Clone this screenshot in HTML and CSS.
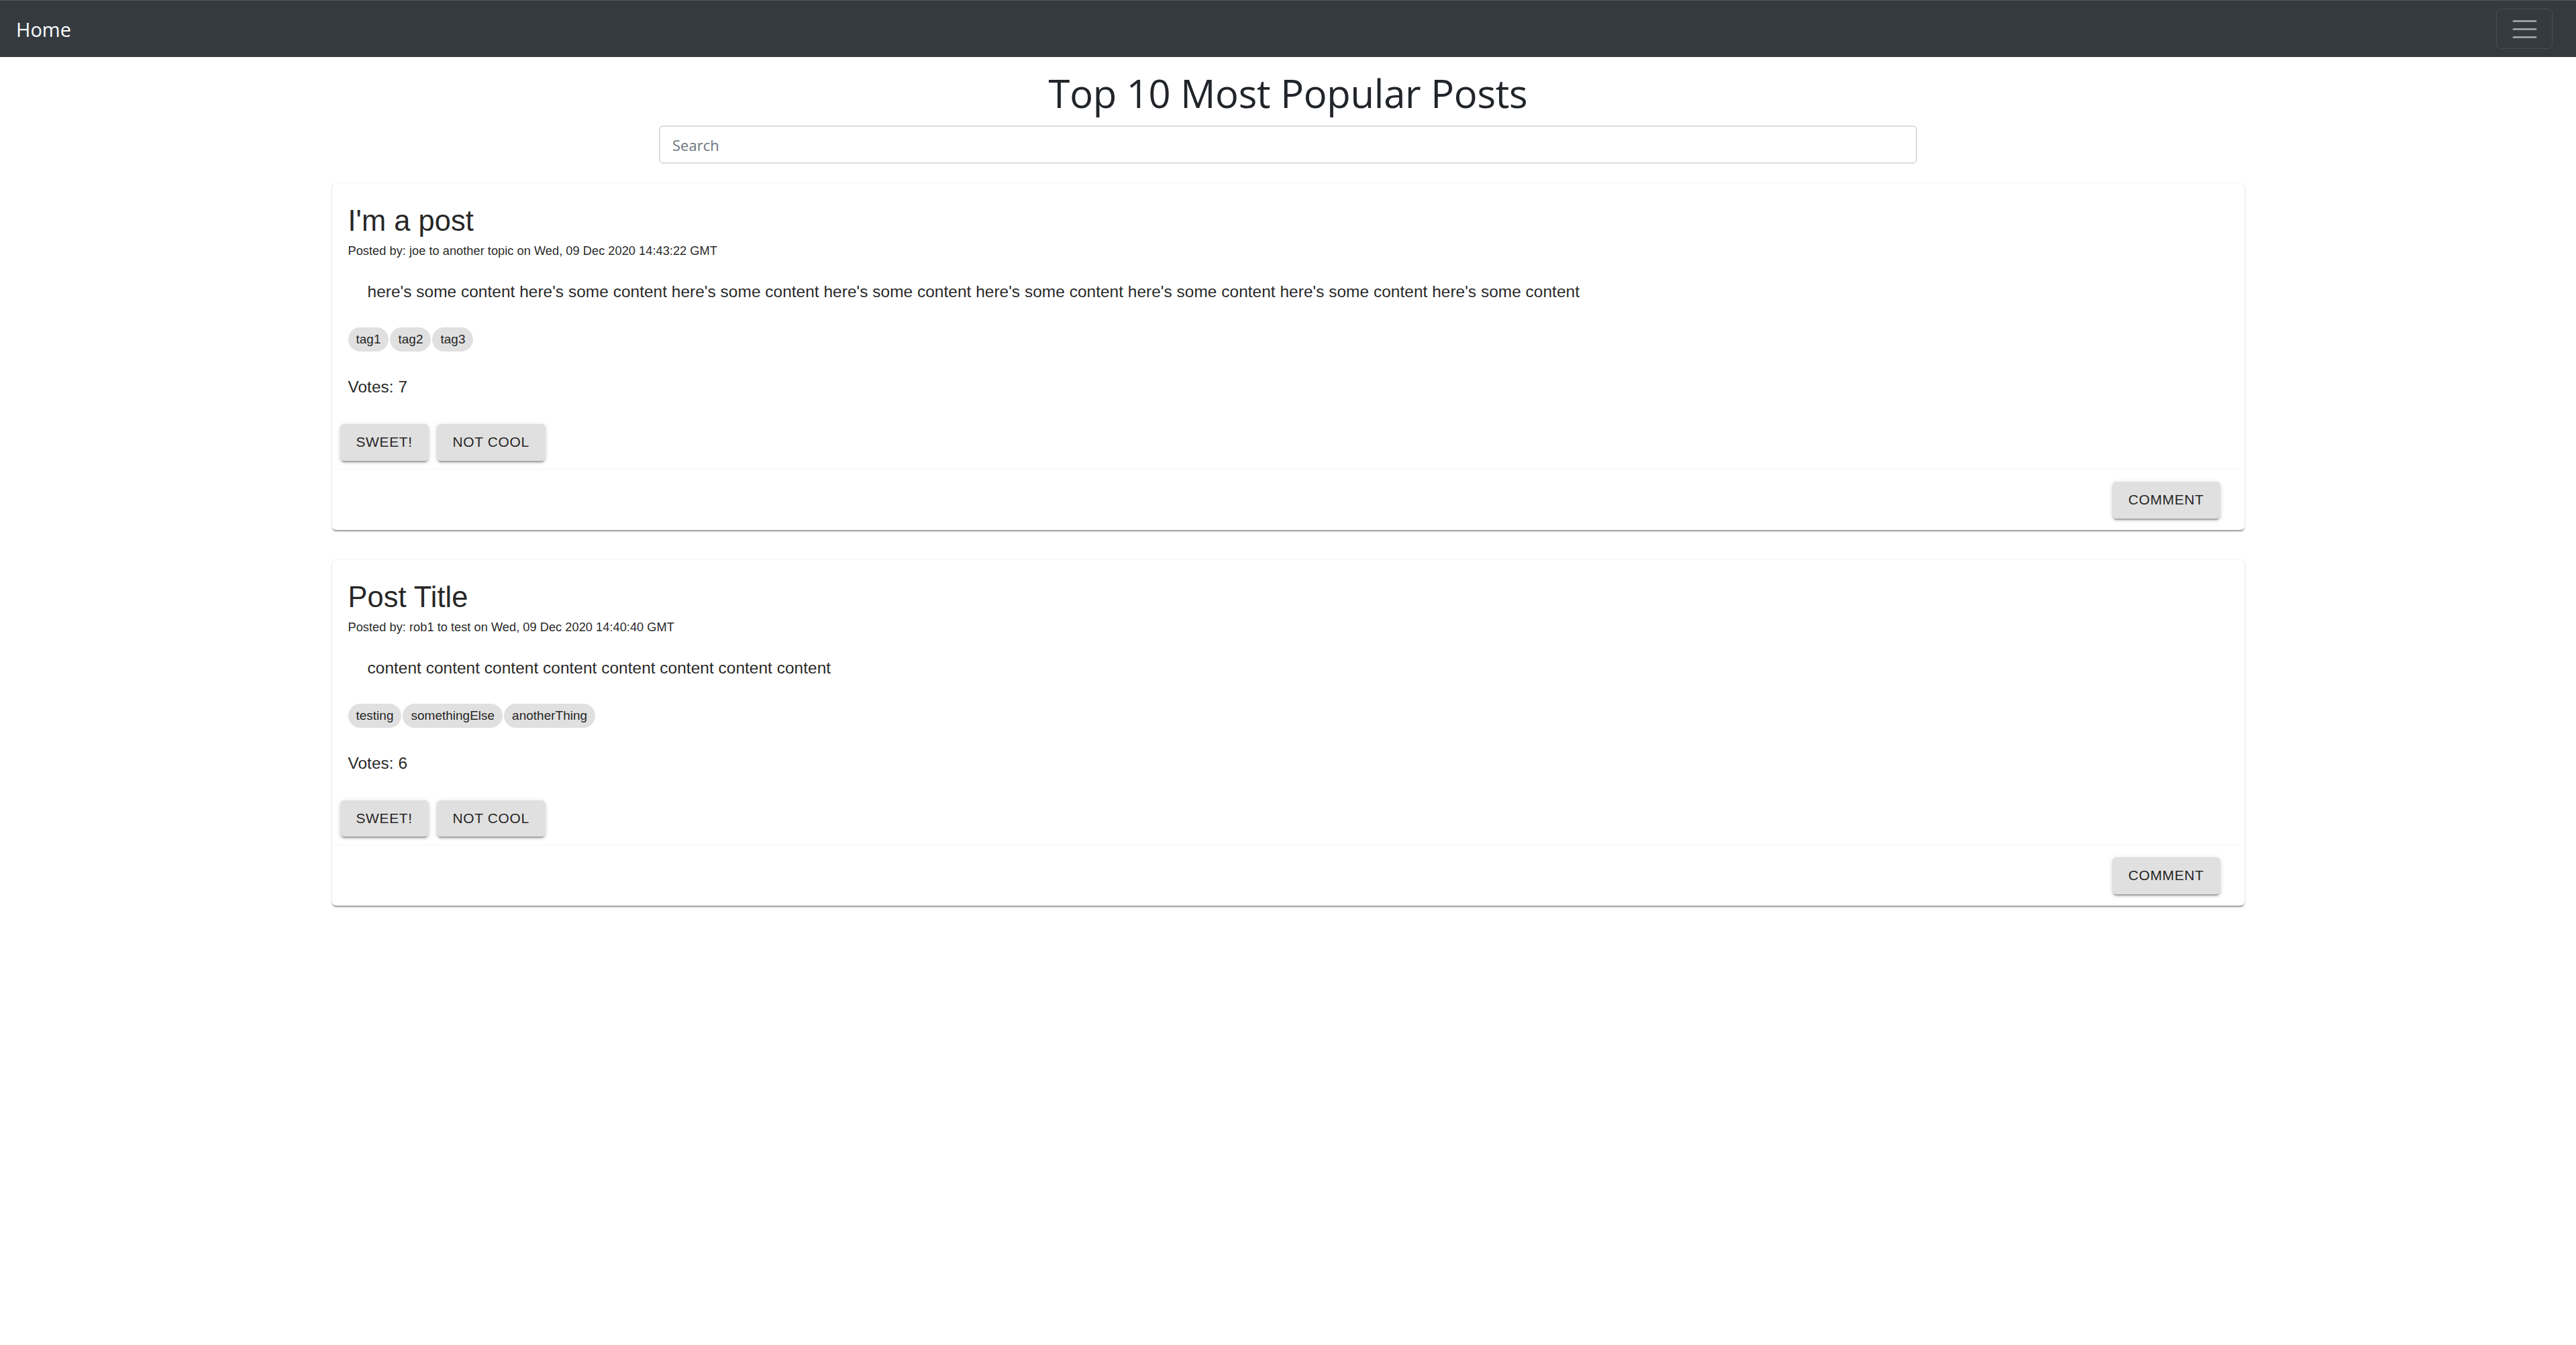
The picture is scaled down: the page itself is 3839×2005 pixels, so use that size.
FILE: index.html
```html
<!DOCTYPE html>
<html lang="en">
<head>
<meta charset="utf-8">
<title>Top 10 Most Popular Posts</title>
<link rel="stylesheet" href="styles.css">
</head>
<body>
<nav class="navbar">
  <a class="brand" href="#">Home</a>
  <button class="toggler" type="button" aria-label="Toggle navigation">
    <svg class="toggler-icon" viewBox="0 0 30 30" width="45" height="45">
      <path d="M4 7h22M4 15h22M4 23h22" stroke="rgba(255,255,255,0.5)" stroke-width="2" stroke-linecap="round" stroke-miterlimit="10" fill="none"/>
    </svg>
  </button>
</nav>
<main class="page">
  <h1 class="page-title">Top 10 Most Popular Posts</h1>
  <input class="search" type="text" placeholder="Search">
  <div class="posts">
    <article class="card">
      <div class="card-content">
        <h2 class="post-title">I'm a post</h2>
        <p class="post-meta">Posted by: joe to another topic on Wed, 09 Dec 2020 14:43:22 GMT</p>
        <p class="post-body">here's some content here's some content here's some content here's some content here's some content here's some content here's some content here's some content</p>
        <div class="tags"><span class="tag">tag1</span><span class="tag">tag2</span><span class="tag">tag3</span></div>
        <p class="votes">Votes: 7</p>
      </div>
      <div class="card-actions">
        <button class="btn" type="button">Sweet!</button>
        <button class="btn" type="button">Not Cool</button>
      </div>
      <div class="card-footer">
        <button class="btn" type="button">Comment</button>
      </div>
    </article>
    <article class="card">
      <div class="card-content">
        <h2 class="post-title">Post Title</h2>
        <p class="post-meta">Posted by: rob1 to test on Wed, 09 Dec 2020 14:40:40 GMT</p>
        <p class="post-body">content content content content content content content content</p>
        <div class="tags"><span class="tag">testing</span><span class="tag">somethingElse</span><span class="tag">anotherThing</span></div>
        <p class="votes">Votes: 6</p>
      </div>
      <div class="card-actions">
        <button class="btn" type="button">Sweet!</button>
        <button class="btn" type="button">Not Cool</button>
      </div>
      <div class="card-footer">
        <button class="btn" type="button">Comment</button>
      </div>
    </article>
  </div>
</main>
</body>
</html>
```

FILE: styles.css
```css
* {
  box-sizing: border-box;
}

html, body {
  margin: 0;
  padding: 0;
  background: #ffffff;
}

body {
  font-family: "Open Sans", "Noto Sans", sans-serif;
  color: #212529;
}

.navbar {
  display: flex;
  align-items: center;
  justify-content: space-between;
  height: 85px;
  padding: 12px 35px 12px 24px;
  background: #343a40;
  border-top: 1px solid #55595e;
}

.brand {
  font-family: "Open Sans", "Noto Sans", sans-serif;
  font-size: 29px;
  line-height: 45px;
  color: #ffffff;
  text-decoration: none;
  padding: 7px 0;
}

.toggler {
  display: flex;
  align-items: center;
  justify-content: center;
  width: 84px;
  height: 60px;
  padding: 6px 18px;
  background: transparent;
  border: 1.5px solid rgba(255, 255, 255, 0.1);
  border-radius: 7px;
}

.toggler-icon {
  display: block;
  width: 45px;
  height: 45px;
}

.page {
  display: flex;
  flex-direction: column;
  align-items: center;
}

.page-title {
  margin: 18px 0 12px;
  font-family: "Open Sans", "Noto Sans", sans-serif;
  font-weight: 500;
  font-size: 58px;
  line-height: 72px;
  letter-spacing: -0.3px;
  color: #212529;
}

.search {
  display: block;
  width: 1875px;
  height: 57px;
  padding: 9px 18px;
  font-family: "Open Sans", "Noto Sans", sans-serif;
  font-size: 22px;
  color: #495057;
  background: #ffffff;
  border: 2px solid #dadde0;
  border-radius: 6px;
  outline: none;
}

.search::placeholder {
  color: #6c757d;
}

.posts {
  display: flex;
  flex-direction: column;
  gap: 45px;
  width: 2850px;
  margin-top: 30px;
  padding-bottom: 40px;
}

.card {
  font-family: "Liberation Sans", Arial, Helvetica, sans-serif;
  color: rgba(0, 0, 0, 0.87);
  background: #ffffff;
  border-radius: 6px;
  box-shadow: 0 3px 1.5px -1.5px rgba(0, 0, 0, 0.2), 0 1.5px 1.5px 0 rgba(0, 0, 0, 0.14), 0 1.5px 4.5px 0 rgba(0, 0, 0, 0.12);
}

.card-content {
  padding: 24px 24px 25px;
}

.post-title {
  margin: 0;
  font-weight: 400;
  font-size: 43.5px;
  line-height: 63px;
}

.post-meta {
  margin: 0;
  font-size: 18.3px;
  line-height: 26px;
}

.post-body {
  margin: 30px 0 0;
  padding-left: 29px;
  font-size: 24.5px;
  line-height: 36px;
}

.tags {
  display: flex;
  gap: 2px;
  margin-top: 35px;
}

.tag {
  display: inline-flex;
  align-items: center;
  height: 36px;
  padding: 0 12px;
  font-size: 19px;
  background: #e0e0e0;
  border-radius: 18px;
  color: rgba(0, 0, 0, 0.87);
}

.votes {
  margin: 35px 0 0;
  font-size: 24.5px;
  line-height: 36px;
}

.card-actions {
  display: flex;
  gap: 12px;
  padding: 12px;
}

.card-footer {
  display: flex;
  justify-content: flex-end;
  padding: 18px 36px 17px;
  border-radius: 6px;
  border-top: 1px solid #f9f9f9;
  box-shadow: 0 -1px 1.5px rgba(0, 0, 0, 0.02);
}

.btn {
  font-family: "Liberation Sans", Arial, Helvetica, sans-serif;
  font-size: 21px;
  font-weight: 400;
  line-height: 36.75px;
  letter-spacing: 0.6px;
  text-transform: uppercase;
  color: rgba(0, 0, 0, 0.87);
  background: #e0e0e0;
  border: none;
  border-radius: 6px;
  padding: 9px 24px;
  min-width: 96px;
  box-shadow: 0 4.5px 1.5px -3px rgba(0, 0, 0, 0.2), 0 3px 3px 0 rgba(0, 0, 0, 0.14), 0 1.5px 7.5px 0 rgba(0, 0, 0, 0.12);
  cursor: pointer;
}
```
